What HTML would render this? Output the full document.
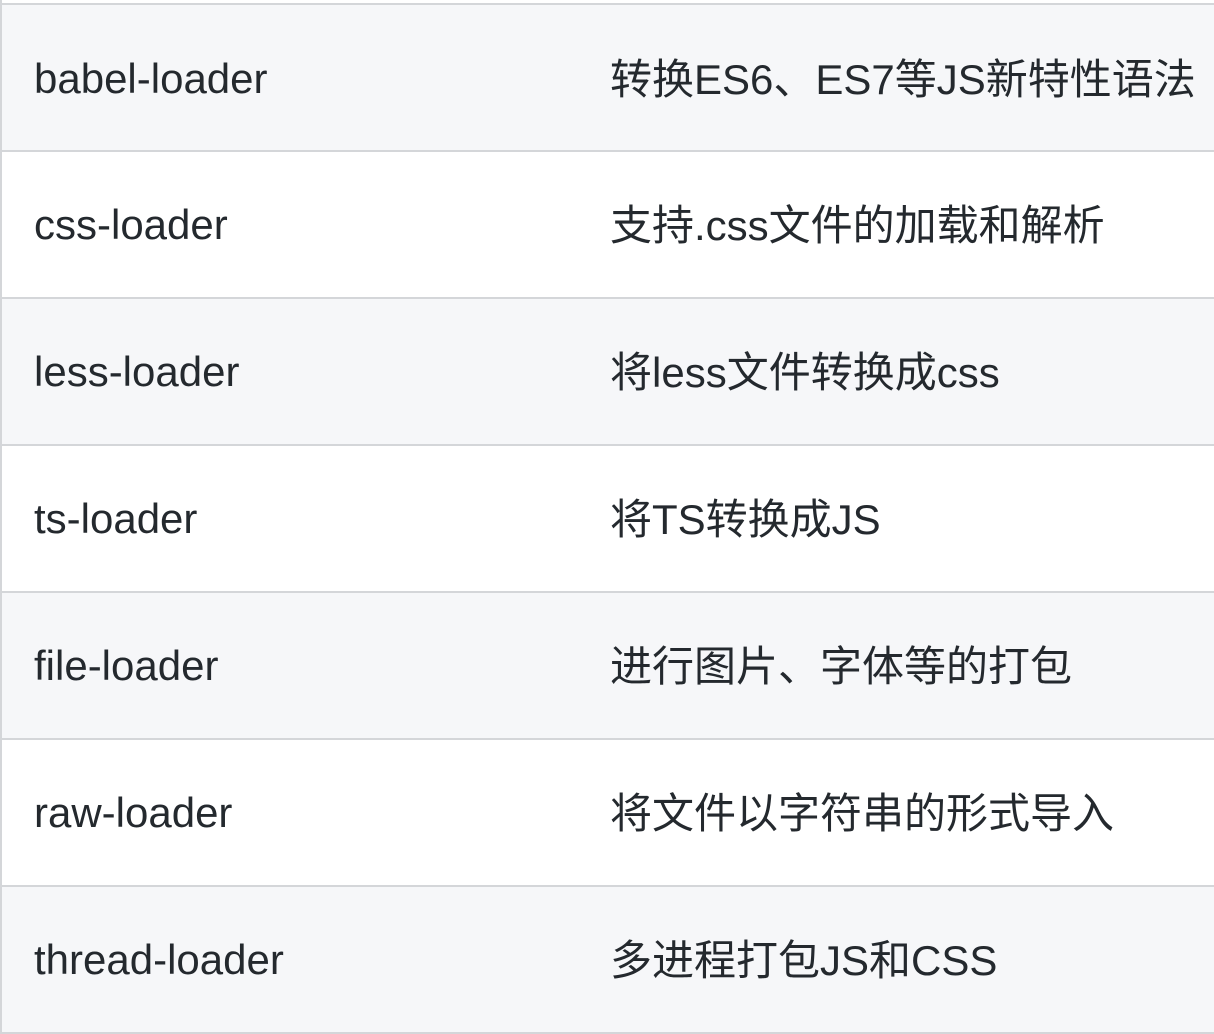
<!DOCTYPE html>
<html><head><meta charset="utf-8"><style>
html,body{margin:0;padding:0;background:#fff;width:1214px;height:1034px;overflow:hidden}
.row{position:absolute;left:0;width:1214px;height:146px;border-top:2px solid #d4d6d9;box-sizing:border-box;font-family:"Liberation Sans","Noto Sans CJK SC",sans-serif;font-size:42px;color:#24292e}
.g{background:#f6f7f9}
.a{position:absolute;left:34px;top:50%;transform:translateY(-50%);white-space:nowrap}
.b{position:absolute;left:610px;top:50%;transform:translateY(-54%);white-space:nowrap}
.l{position:absolute;left:0;top:0;width:2px;height:1034px;background:#d4d6d9}
</style></head><body>
<div class="row g" style="top:3px;height:149px"><span class="a">babel-loader</span><span class="b">转换ES6、ES7等JS新特性语法</span></div>
<div class="row" style="top:150px;height:148px"><span class="a">css-loader</span><span class="b">支持.css文件的加载和解析</span></div>
<div class="row g" style="top:297px;height:148px"><span class="a">less-loader</span><span class="b">将less文件转换成css</span></div>
<div class="row" style="top:444px;height:148px"><span class="a">ts-loader</span><span class="b">将TS转换成JS</span></div>
<div class="row g" style="top:591px;height:148px"><span class="a">file-loader</span><span class="b">进行图片、字体等的打包</span></div>
<div class="row" style="top:738px;height:148px"><span class="a">raw-loader</span><span class="b">将文件以字符串的形式导入</span></div>
<div class="row g" style="top:885px;height:149px;border-bottom:2px solid #d4d6d9"><span class="a">thread-loader</span><span class="b">多进程打包JS和CSS</span></div>
<div class="l"></div>
</body></html>
